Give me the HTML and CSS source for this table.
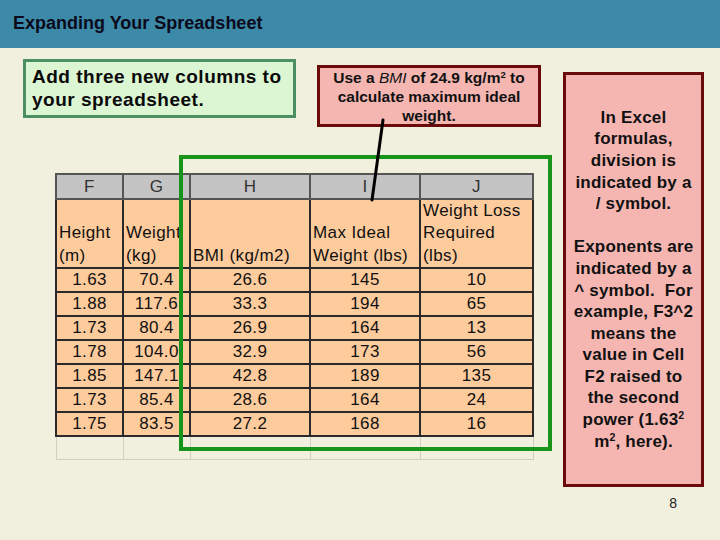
FILE: index.html
```html
<!DOCTYPE html>
<html>
<head>
<meta charset="utf-8">
<link rel="stylesheet" href="styles.css">
</head>
<body>
<div class="slide">
  <header class="title-bar"><h1 class="title">Expanding Your Spreadsheet</h1></header>
  <main class="stage">
    <section class="left-col">
      <div class="top-row">
        <div class="note-green">Add three new columns to your spreadsheet.</div>
        <div class="note-pink">Use a <i>BMI</i> of 24.9 kg/m<sup>2</sup> to calculate maximum ideal weight.</div>
      </div>
      <table class="sheet">
        <colgroup>
          <col class="c-f"><col class="c-g"><col class="c-h"><col class="c-i"><col class="c-j">
        </colgroup>
        <tr class="col-heads"><th>F</th><th>G</th><th>H</th><th>I</th><th>J</th></tr>
        <tr class="labels">
          <td>Height<br>(m)</td>
          <td>Weight<br>(kg)</td>
          <td>BMI (kg/m2)</td>
          <td>Max Ideal<br>Weight (lbs)</td>
          <td>Weight Loss<br>Required<br>(lbs)</td>
        </tr>
        <tr class="data"><td>1.63</td><td>70.4</td><td>26.6</td><td>145</td><td>10</td></tr>
        <tr class="data"><td>1.88</td><td>117.6</td><td>33.3</td><td>194</td><td>65</td></tr>
        <tr class="data"><td>1.73</td><td>80.4</td><td>26.9</td><td>164</td><td>13</td></tr>
        <tr class="data"><td>1.78</td><td>104.0</td><td>32.9</td><td>173</td><td>56</td></tr>
        <tr class="data"><td>1.85</td><td>147.1</td><td>42.8</td><td>189</td><td>135</td></tr>
        <tr class="data"><td>1.73</td><td>85.4</td><td>28.6</td><td>164</td><td>24</td></tr>
        <tr class="data"><td>1.75</td><td>83.5</td><td>27.2</td><td>168</td><td>16</td></tr>
        <tr class="blank"><td></td><td></td><td></td><td></td><td></td></tr>
      </table>
    </section>
    <aside class="right-col">
      <div class="note-tall">
        <p>In Excel<br>formulas,<br>division is<br>indicated by a<br>/ symbol.</p>
        <p>Exponents are<br>indicated by a<br>^ symbol.&nbsp; For<br>example, F3^2<br>means the<br>value in Cell<br>F2 raised to<br>the second<br>power (1.63<sup>2</sup><br>m<sup>2</sup>, here).</p>
      </div>
      <div class="page-num">8</div>
    </aside>
  </main>
  <div class="highlight"></div>
  <svg class="pointer" width="720" height="540" viewBox="0 0 720 540">
    <line x1="383" y1="120" x2="372" y2="200" stroke="#000" stroke-width="3" stroke-linecap="round"/>
  </svg>
</div>
</body>
</html>
```
FILE: styles.css
```css
html, body {
  margin: 0;
  padding: 0;
}
body {
  background: #f1f0df;
  font-family: "Liberation Sans", Arial, sans-serif;
  color: #000;
  width: 720px;
  height: 540px;
  overflow: hidden;
}
.slide {
  width: 720px;
  height: 540px;
  position: relative;
  overflow: hidden;
}
.title-bar {
  height: 48px;
  background: #3d89a8;
  display: flex;
  align-items: center;
  padding-left: 13px;
  box-sizing: border-box;
}
.title {
  margin: 0;
  font-size: 18px;
  font-weight: bold;
  color: #0a0a1a;
  padding-bottom: 1px;
}
.stage {
  display: flex;
  padding-left: 23px;
}
.left-col {
  width: 518px;
  display: flex;
  flex-direction: column;
}
.top-row {
  display: flex;
  align-items: flex-start;
  gap: 21px;
}
.note-green {
  margin-top: 11px;
  width: 273px;
  height: 59px;
  box-sizing: border-box;
  border: 3px solid #4b8f63;
  background: #dcf5d3;
  font-size: 19px;
  font-weight: bold;
  line-height: 23px;
  padding: 3px 0 0 6px;
  letter-spacing: 0.5px;
  color: #0a0a0a;
}
.note-pink {
  margin-top: 17px;
  width: 224px;
  height: 62px;
  box-sizing: border-box;
  border: 3px solid #6a0a0a;
  background: #f5b6b1;
  font-size: 15.5px;
  font-weight: bold;
  line-height: 19px;
  text-align: center;
  padding: 0 2px;
  color: #111;
}
.note-pink i {
  font-weight: normal;
}
sup {
  font-size: 0.62em;
  line-height: 0;
  vertical-align: 0.55em;
}
.sheet {
  margin-top: 46px;
  margin-left: 32px;
  border-collapse: collapse;
  table-layout: fixed;
  width: 477px;
  font-size: 17px;
  letter-spacing: 0.4px;
  color: #111;
}
.c-f { width: 67px; }
.c-g { width: 67px; }
.c-h { width: 120px; }
.c-i { width: 110px; }
.c-j { width: 113px; }
.sheet th, .sheet td {
  border: 2px solid #2a2a2a;
  padding: 0;
  overflow: hidden;
  white-space: nowrap;
}
.col-heads th {
  background: #c4c4c4;
  font-weight: normal;
  height: 23px;
  color: #333;
  line-height: 23px;
  border-color: #555;
}
.labels td {
  background: #fdcb9c;
  height: 67px;
  vertical-align: bottom;
  text-align: left;
  line-height: 22.3px;
  padding-left: 2px;
  padding-bottom: 0;
}
.labels td:last-child {
  vertical-align: top;
}
.data td {
  background: #fdcb9c;
  height: 22px;
  line-height: 22px;
  text-align: center;
}
.blank td {
  height: 22px;
  border: 1px solid #cfcfc4;
  border-top: 2px solid #2a2a2a;
}
.right-col {
  margin-left: 22px;
  width: 141px;
  display: flex;
  flex-direction: column;
}
.note-tall {
  margin-top: 24px;
  height: 415px;
  box-sizing: border-box;
  border: 3px solid #6a0a0a;
  background: #f5b6b1;
  font-size: 17px;
  letter-spacing: 0.2px;
  font-weight: bold;
  line-height: 21.6px;
  text-align: center;
  color: #111;
  display: flex;
  flex-direction: column;
  justify-content: center;
  gap: 21.6px;
  white-space: nowrap;
}
.note-tall p {
  margin: 0;
}
.page-num {
  margin-top: 8px;
  font-size: 14px;
  text-align: right;
  padding-right: 27px;
  color: #222;
}
.highlight {
  position: absolute;
  left: 179px;
  top: 155px;
  width: 373px;
  height: 296px;
  box-sizing: border-box;
  border: 4px solid #17951a;
  pointer-events: none;
}
.pointer {
  position: absolute;
  left: 0;
  top: 0;
  pointer-events: none;
}
```
